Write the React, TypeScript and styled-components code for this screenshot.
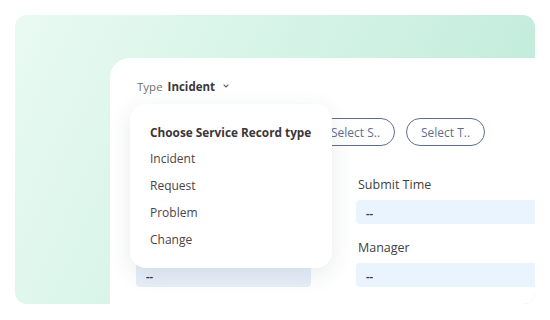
import React from "react";
import styled, { createGlobalStyle } from "styled-components";

const Global = createGlobalStyle`
  html, body { margin: 0; padding: 0; background: #ffffff; }
  body { font-family: "Open Sans", "Liberation Sans", sans-serif; }
  * { box-sizing: border-box; }
`;

const Stage = styled.div`
  width: 550px;
  height: 320px;
  padding: 15px;
  background: #ffffff;
`;

const GreenCard = styled.div`
  width: 520px;
  height: 289px;
  border-radius: 12px;
  overflow: hidden;
  background: linear-gradient(115deg, #e9faf3 0%, #d4f3e6 45%, #bce9d7 100%);
  padding: 43px 0 0 95px;
  display: flex;
`;

const Panel = styled.div`
  position: relative;
  flex: 1;
  background: #ffffff;
  border-top-left-radius: 20px;
  padding: 20px 0 0 26px;
  display: flex;
  flex-direction: column;
`;

const TypeRow = styled.div`
  display: flex;
  align-items: center;
  height: 16px;
  font-size: 11.5px;
  gap: 5px;
  padding-left: 1px;
`;

const TypeLabel = styled.span`
  color: #707070;
`;

const TypeValue = styled.span`
  color: #3a3838;
  font-weight: 700;
`;

const Chevron = styled.svg`
  margin-left: 3px;
  width: 6px;
  height: 4px;
`;

const FilterRow = styled.div`
  display: flex;
  gap: 11px;
  margin-top: 24px;
`;

const Pill = styled.div`
  width: 79px;
  height: 28px;
  border: 1px solid #5d6f8e;
  border-radius: 14px;
  display: flex;
  align-items: center;
  justify-content: center;
  font-size: 12px;
  color: #5d6f8e;
`;

const Fields = styled.div`
  display: grid;
  grid-template-columns: 175px 200px;
  column-gap: 45px;
  row-gap: 17px;
  margin-top: 32px;
`;

const Field = styled.div`
  display: flex;
  flex-direction: column;
  gap: 8px;
`;

const Label = styled.div`
  font-size: 12.5px;
  line-height: 14px;
  height: 14px;
  padding-left: 2px;
  color: #3f3f3f;
`;

const Value = styled.div<{ $shaded?: boolean }>`
  height: 24px;
  border-radius: 4px;
  background: ${(p) => (p.$shaded ? "#e5eef9" : "#eaf4ff")};
  padding-left: 10px;
  display: flex;
  align-items: center;
  font-size: 11px;
  font-weight: 700;
  color: #3a3a3a;
`;

const Menu = styled.div`
  position: absolute;
  left: 20px;
  top: 46px;
  width: 202px;
  height: 164px;
  background: #ffffff;
  border-radius: 16px;
  box-shadow: 0 6px 22px rgba(40, 60, 60, 0.1);
  padding: 14px 0 0 20px;
  display: flex;
  flex-direction: column;
`;

const MenuItem = styled.div<{ $header?: boolean }>`
  height: 27px;
  display: flex;
  align-items: center;
  font-size: ${(p) => (p.$header ? "11.8px" : "12px")};
  font-weight: ${(p) => (p.$header ? 700 : 400)};
  color: ${(p) => (p.$header ? "#3b3637" : "#4a4446")};
`;

export default function App() {
  return (
    <>
      <Global />
      <Stage>
        <GreenCard>
          <Panel>
            <TypeRow>
              <TypeLabel>Type</TypeLabel>
              <TypeValue>Incident</TypeValue>
              <Chevron viewBox="0 0 6 4">
                <path d="M1 1 L3 3 L5 1" fill="none" stroke="#666" strokeWidth="1.1" strokeLinecap="round" strokeLinejoin="round" />
              </Chevron>
            </TypeRow>
            <FilterRow>
              <Pill />
              <Pill />
              <Pill>Select S..</Pill>
              <Pill>Select T..</Pill>
            </FilterRow>
            <Fields>
              <Field>
                <Label />
                <Value />
              </Field>
              <Field>
                <Label>Submit Time</Label>
                <Value>--</Value>
              </Field>
              <Field>
                <Label />
                <Value $shaded>--</Value>
              </Field>
              <Field>
                <Label>Manager</Label>
                <Value>--</Value>
              </Field>
            </Fields>
            <Menu>
              <MenuItem $header>Choose Service Record type</MenuItem>
              <MenuItem>Incident</MenuItem>
              <MenuItem>Request</MenuItem>
              <MenuItem>Problem</MenuItem>
              <MenuItem>Change</MenuItem>
            </Menu>
          </Panel>
        </GreenCard>
      </Stage>
    </>
  );
}
